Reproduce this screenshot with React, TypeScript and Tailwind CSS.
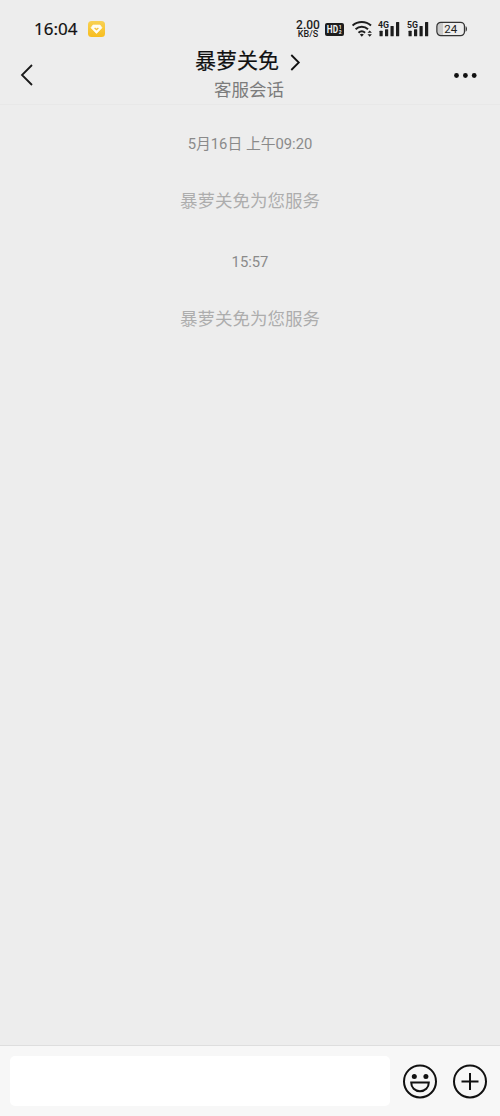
import type { ReactNode } from 'react';

interface ChatEvent {
  time: string;
  notice: string;
}

const EVENTS: ChatEvent[] = [
  { time: '5月16日 上午09:20', notice: '暴萝关免为您服务' },
  { time: '15:57', notice: '暴萝关免为您服务' },
];

function AppBadge() {
  return (
    <svg className="ml-[11px] h-4 w-[17px]" viewBox="0 0 17 16">
      <defs>
        <linearGradient id="badge" x1="0" y1="0" x2="0" y2="1">
          <stop offset="0" stopColor="#f8d154" />
          <stop offset="1" stopColor="#f8bd1e" />
        </linearGradient>
      </defs>
      <rect width="17" height="16" rx="3.5" fill="url(#badge)" />
      <path d="M5 4.1h7l1.9 2.7-5.4 5.6-5.4-5.6z" fill="#fffdf2" stroke="#fffdf2" strokeWidth=".8" strokeLinejoin="round" />
      <path d="M6.6 6.9l1.9 1.7 1.9-1.7" fill="none" stroke="#f5c23a" strokeWidth="1.3" />
    </svg>
  );
}

function HdBadge() {
  return (
    <svg className="ml-[5px] h-[13px] w-[19px]" viewBox="0 0 19 13">
      <rect width="19" height="13" rx="2" fill="#1d1d1d" />
      <text x="1.8" y="10.2" fontSize="10" fontWeight="700" fill="#f3f3f3" textLength="11.2" lengthAdjust="spacingAndGlyphs">
        HD
      </text>
      <text x="13.8" y="6" fontSize="5" fontWeight="700" fill="#f3f3f3">1</text>
      <text x="13.8" y="11.3" fontSize="5" fontWeight="700" fill="#f3f3f3">2</text>
    </svg>
  );
}

function WifiIcon() {
  return (
    <svg className="ml-[8px] h-4 w-[21px]" viewBox="0 0 21 16" fill="none" stroke="#1d1d1d" strokeWidth="2">
      <path d="M.6 4.6a13.6 13.6 0 0 1 18.4 0" />
      <path d="M3.6 8.2a9.3 9.3 0 0 1 12.4 0" />
      <path d="M6.5 11.7a5 5 0 0 1 6.6 0" />
      <path d="M7.8 13.6L9.8 15.7l2-2.1a3.2 3.2 0 0 0-4 0z" fill="#1d1d1d" stroke="none" />
      <path d="M15.5 11.8l2.2-2.4 2.2 2.4zM15.5 13.3l2.2 2.4 2.2-2.4z" fill="#1d1d1d" stroke="none" />
    </svg>
  );
}

function SignalIcon({ label }: { label: string }) {
  return (
    <svg className="h-[22px] w-[22px]" viewBox="0 -3 22 22" fill="#1d1d1d">
      <text x="0" y="7.3" fontSize="9.5" fontWeight="700" textLength="11" lengthAdjust="spacingAndGlyphs">
        {label}
      </text>
      <rect x="1.5" y="9.8" width="3.2" height="5.4" rx=".5" />
      <rect x="7" y="8.2" width="3.2" height="7" rx=".5" />
      <rect x="12.5" y="5" width="3.2" height="10.2" rx=".5" />
      <rect x="18" y="1.1" width="3.2" height="14.1" rx=".5" />
    </svg>
  );
}

function BatteryIcon() {
  return (
    <svg className="ml-[7px] h-4 w-8" viewBox="0 0 32 16">
      <path d="M5 2h2v12H5a3.2 3.2 0 0 1-3.2-3.2V5.2A3.2 3.2 0 0 1 5 2z" fill="#cbcbcb" />
      <rect x=".9" y="1.4" width="27.6" height="13.2" rx="4" fill="none" stroke="#343434" strokeWidth="1.3" />
      <path d="M29.7 5.3c1.7.4 1.7 5 0 5.4z" fill="#343434" />
      <text x="14.8" y="12.1" fontSize="11.5" textAnchor="middle" fill="#222">24</text>
    </svg>
  );
}

function StatusBar() {
  return (
    <div className="flex h-[46px] items-center pt-3 pr-8 pl-[34px] text-[#111]">
      <span className="w-[43px] pb-[2px] font-['Noto_Sans'] text-[17px] leading-none [-webkit-text-stroke:0.2px]">16:04</span>
      <AppBadge />
      <div className="ml-auto flex items-center">
        <div className="flex w-6 flex-col items-center pt-[1px] text-[#1d1d1d]">
          <span className="text-[12px] leading-[10px] font-medium">2.00</span>
          <span className="text-[9px] leading-[9px] font-medium">KB/S</span>
        </div>
        <HdBadge />
        <WifiIcon />
        <div className="ml-[5px] flex gap-[7px]">
          <SignalIcon label="4G" />
          <SignalIcon label="5G" />
        </div>
        <BatteryIcon />
      </div>
    </div>
  );
}

function ChatHeader() {
  return (
    <header className="flex h-[59px] items-center justify-between border-b border-[#e8e8e8] pr-[22px] pl-5">
      <button aria-label="返回" className="h-[22px] w-14">
        <svg className="h-[22px] w-[13px]" viewBox="0 0 13 22" fill="none" stroke="#1a1a1a" strokeWidth="1.8">
          <path d="M12 1L2 11l10 10" />
        </svg>
      </button>
      <div className="flex flex-col items-center">
        <h1 className="mr-[2px] flex items-center text-[21px] leading-[30px] text-[#111] [-webkit-text-stroke:0.2px]">
          暴萝关免
          <svg className="mt-[3px] ml-[11px] h-[17px] w-[11px]" viewBox="0 0 11 17" fill="none" stroke="#111" strokeWidth="1.8">
            <path d="M1.3 1l7.5 7.5L1.3 16" />
          </svg>
        </h1>
        <p className="text-[17.5px] leading-[29px] text-[#7c7c7c]">客服会话</p>
      </div>
      <button aria-label="更多" className="flex w-14 items-center justify-end">
        <svg className="h-[5px] w-6" viewBox="0 0 24 5" fill="#111">
          <circle cx="2.5" cy="2.5" r="2.4" />
          <circle cx="11.4" cy="2.5" r="2.4" />
          <circle cx="20.2" cy="2.5" r="2.4" />
        </svg>
      </button>
    </header>
  );
}

function IconButton({ label, children }: { label: string; children: ReactNode }) {
  return (
    <button aria-label={label}>
      <svg className="h-9 w-9" viewBox="0 0 36 36" fill="none" stroke="#111" strokeWidth="2">
        <circle cx="18" cy="18.4" r="16" />
        {children}
      </svg>
    </button>
  );
}

function InputBar() {
  return (
    <footer className="flex h-[71px] items-center border-t border-[#dedede] bg-[#f7f7f7] px-[10px]">
      <input aria-label="消息" className="h-[50px] w-[380px] rounded-[5px] bg-white px-3 outline-none" />
      <div className="ml-3 flex shrink-0 gap-[14px]">
        <IconButton label="表情">
          <circle cx="12.3" cy="13.4" r="2.5" fill="#111" stroke="none" />
          <circle cx="23.9" cy="13.4" r="2.5" fill="#111" stroke="none" />
          <path d="M9.2 19.6h17.6c0 5-3.7 8.6-8.8 8.6s-8.8-3.6-8.8-8.6z" />
        </IconButton>
        <IconButton label="更多功能">
          <path d="M18 9.9v17M9.5 18.4h17" />
        </IconButton>
      </div>
    </footer>
  );
}

export default function App() {
  return (
    <div className="flex h-[1116px] w-[500px] flex-col bg-[#ededed] font-[Roboto,'Noto_Sans_CJK_SC',sans-serif]">
      <StatusBar />
      <ChatHeader />
      <main className="flex flex-1 flex-col items-center pt-[26px]">
        {EVENTS.map((event) => (
          <section key={event.time} className="flex h-[118px] flex-col items-center">
            <time className="text-[14.8px] leading-[26px] text-[#8a8a8a]">{event.time}</time>
            <p className="mt-[30px] text-[17.5px] leading-[29px] text-[#adadad]">{event.notice}</p>
          </section>
        ))}
      </main>
      <InputBar />
    </div>
  );
}
